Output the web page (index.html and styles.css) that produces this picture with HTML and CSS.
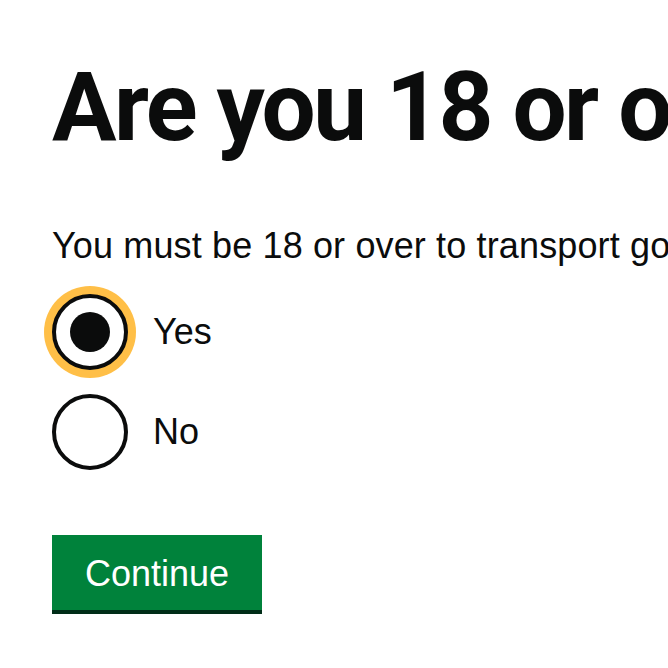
FILE: index.html
```html
<!DOCTYPE html>
<html lang="en">
<head>
<meta charset="utf-8">
<title>Are you 18 or over?</title>
<link rel="stylesheet" href="styles.css">
</head>
<body>
<main class="page">
  <form class="form">
    <fieldset class="fieldset">
      <legend class="legend"><h1 class="heading">Are you 18 or over?</h1></legend>
      <p class="hint">You must be 18 or over to transport goods</p>
      <div class="radios">
        <label class="radio-item">
          <input class="radio-input focused" type="radio" name="over18" value="yes" checked>
          <span class="radio-label">Yes</span>
        </label>
        <label class="radio-item">
          <input class="radio-input" type="radio" name="over18" value="no">
          <span class="radio-label">No</span>
        </label>
      </div>
    </fieldset>
    <button class="button" type="button">Continue</button>
  </form>
</main>
</body>
</html>
```

FILE: styles.css
```css
html {
  overflow: hidden;
  background: #ffffff;
}

body {
  margin: 0;
  padding: 0 0 40px;
  color: #0b0c0c;
  font-family: "Liberation Sans", Arial, sans-serif;
}

.page {
  padding: 59px 0 0 52px;
  white-space: nowrap;
}

.form {
  margin: 0;
}

.fieldset {
  margin: 0;
  padding: 0;
  border: 0;
  min-width: 0;
}

.legend {
  padding: 0;
  display: block;
}

.heading {
  margin: 0;
  font-family: Roboto, "Liberation Sans", sans-serif;
  font-weight: 700;
  font-size: 96px;
  line-height: 96px;
  letter-spacing: -2.5px;
}

.hint {
  margin: 73px 0 0;
  font-size: 36px;
  line-height: 36px;
  letter-spacing: 0.14px;
}

.radios {
  margin-top: 30px;
  display: flex;
  flex-direction: column;
  gap: 24px;
}

.radio-item {
  display: flex;
  align-items: center;
  gap: 25px;
  height: 76px;
}

.radio-input {
  -webkit-appearance: none;
  appearance: none;
  margin: 0;
  width: 76px;
  height: 76px;
  box-sizing: border-box;
  border: 4px solid #0b0c0c;
  border-radius: 50%;
  background: #ffffff;
  display: grid;
  place-items: center;
  flex: none;
}

.radio-input:checked::before {
  content: "";
  width: 40px;
  height: 40px;
  border-radius: 50%;
  background: #0b0c0c;
}

.radio-input.focused {
  box-shadow: 0 0 0 8px #ffbf47;
}

.radio-label {
  font-size: 36px;
  line-height: 36px;
}

.button {
  margin-top: 65px;
  display: inline-block;
  font-family: "Liberation Sans", Arial, sans-serif;
  font-size: 36px;
  line-height: 36px;
  color: #ffffff;
  background: #00823b;
  border: 0;
  border-radius: 0;
  padding: 21px 33px 18px;
  box-shadow: 0 4px 0 #002d18;
  cursor: pointer;
}
```
